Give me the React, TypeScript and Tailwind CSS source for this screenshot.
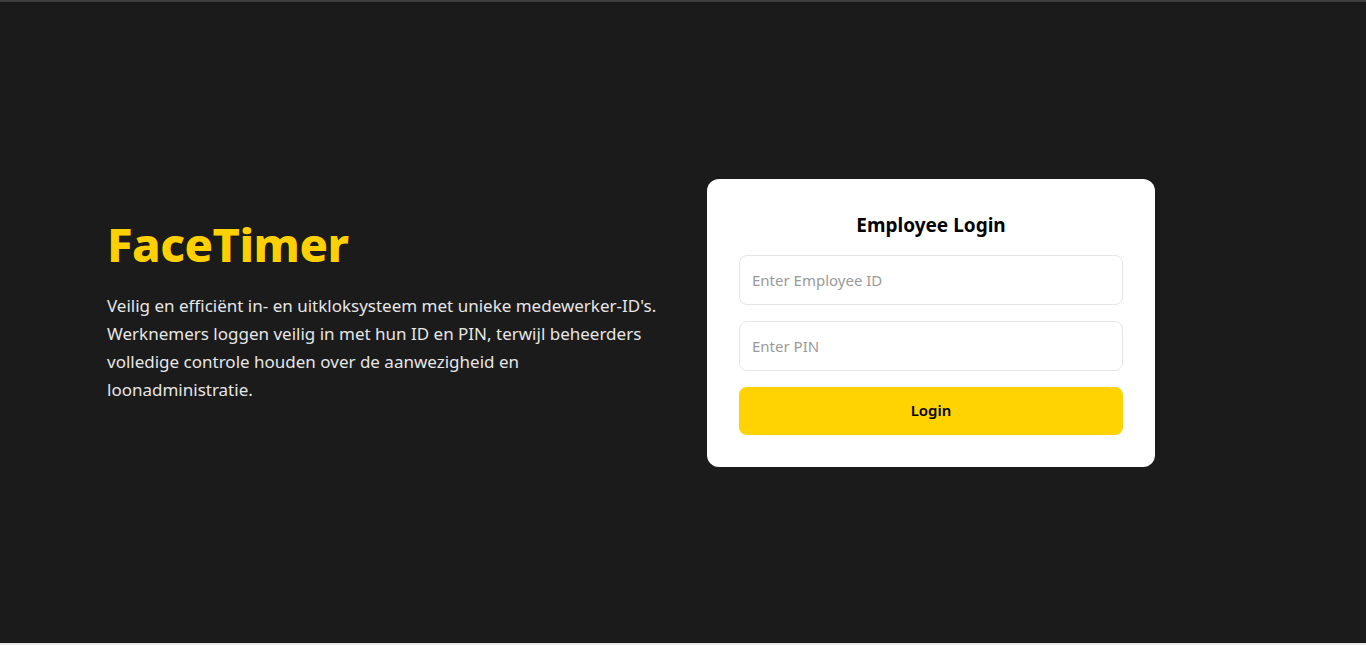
export default function App() {
  return (
    <div className="min-h-screen bg-[#1b1b1b] flex flex-col" style={{ fontFamily: '"Noto Sans", "Open Sans", sans-serif' }}>
      <div className="h-[2px] bg-[#3d3d3d]" />
      <div className="flex-1 flex items-center">
        <div className="w-full max-w-6xl mx-auto grid grid-cols-2 gap-12 items-center">
          <div className="-mt-[20px]">
            <h1 className="text-[47px] leading-none font-extrabold text-[#ffd000] tracking-[-0.5px]">FaceTimer</h1>
            <p className="mt-6 text-[17px] leading-[28px] text-[#e6e6e6]">
              Veilig en efficiënt in- en uitkloksysteem met unieke medewerker-ID's. Werknemers loggen veilig in met hun ID en PIN, terwijl beheerders volledige controle houden over de aanwezigheid en loonadministratie.
            </p>
          </div>
          <div>
            <div className="w-[448px] bg-white rounded-xl p-8">
              <h2 className="text-center text-[19px] leading-7 font-bold text-black">Employee Login</h2>
              <div className="mt-4 flex flex-col gap-4">
                <input
                  className="h-[50px] w-full rounded-lg border border-[#e6e6e6] px-3 text-[15px] outline-none placeholder:text-[#9a9a9a]"
                  placeholder="Enter Employee ID"
                />
                <input
                  className="h-[50px] w-full rounded-lg border border-[#e6e6e6] px-3 text-[15px] outline-none placeholder:text-[#9a9a9a]"
                  placeholder="Enter PIN"
                  type="password"
                />
                <button className="h-12 w-full rounded-lg bg-[#ffd300] text-[15px] font-semibold text-black">Login</button>
              </div>
            </div>
          </div>
        </div>
      </div>
      <div className="h-[2px] bg-[#e6e6e6]" />
    </div>
  );
}
